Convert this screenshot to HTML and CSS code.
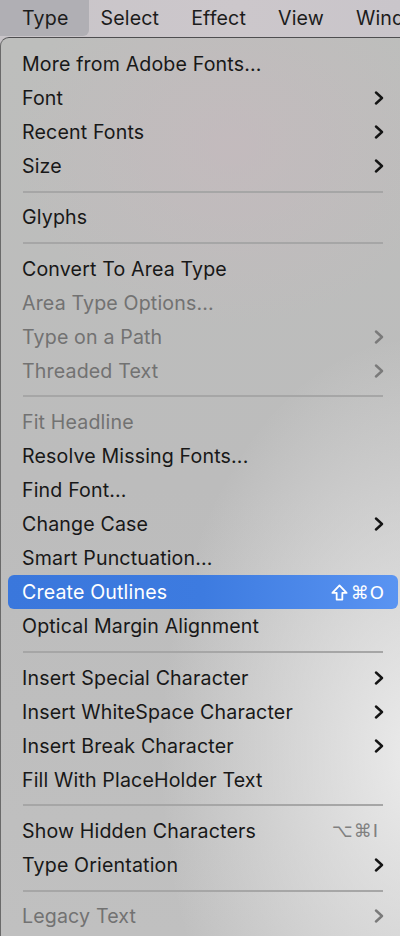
FILE: index.html
```html
<!DOCTYPE html>
<html>
<head>
<meta charset="utf-8">
<link rel="stylesheet" href="styles.css">
</head>
<body>
<div class="screen">
  <div class="menubar">
    <div class="mb-item active">Type</div>
    <div class="mb-item">Select</div>
    <div class="mb-item">Effect</div>
    <div class="mb-item">View</div>
    <div class="mb-item">Window</div>
  </div>
  <div class="menu">
    <div class="row"><span class="label">More from Adobe Fonts...</span></div>
    <div class="row"><span class="label">Font</span><svg class="chev" viewBox="0 0 10 14"><path d="M2 1.5 L8 7 L2 12.5"/></svg></div>
    <div class="row"><span class="label">Recent Fonts</span><svg class="chev" viewBox="0 0 10 14"><path d="M2 1.5 L8 7 L2 12.5"/></svg></div>
    <div class="row"><span class="label">Size</span><svg class="chev" viewBox="0 0 10 14"><path d="M2 1.5 L8 7 L2 12.5"/></svg></div>
    <div class="sep"></div>
    <div class="row"><span class="label">Glyphs</span></div>
    <div class="sep"></div>
    <div class="row"><span class="label">Convert To Area Type</span></div>
    <div class="row disabled"><span class="label">Area Type Options...</span></div>
    <div class="row disabled"><span class="label">Type on a Path</span><svg class="chev" viewBox="0 0 10 14"><path d="M2 1.5 L8 7 L2 12.5"/></svg></div>
    <div class="row disabled"><span class="label">Threaded Text</span><svg class="chev" viewBox="0 0 10 14"><path d="M2 1.5 L8 7 L2 12.5"/></svg></div>
    <div class="sep"></div>
    <div class="row disabled"><span class="label">Fit Headline</span></div>
    <div class="row"><span class="label">Resolve Missing Fonts...</span></div>
    <div class="row"><span class="label">Find Font...</span></div>
    <div class="row"><span class="label">Change Case</span><svg class="chev" viewBox="0 0 10 14"><path d="M2 1.5 L8 7 L2 12.5"/></svg></div>
    <div class="row"><span class="label">Smart Punctuation...</span></div>
    <div class="row selected"><span class="label">Create Outlines</span><span class="shortcut"><svg class="shift" viewBox="0 0 18 18"><path d="M9 1.5 L16.5 9.5 H12 V16.5 H6 V9.5 H1.5 Z"/></svg><span class="keys">⌘O</span></span></div>
    <div class="row"><span class="label">Optical Margin Alignment</span></div>
    <div class="sep"></div>
    <div class="row"><span class="label">Insert Special Character</span><svg class="chev" viewBox="0 0 10 14"><path d="M2 1.5 L8 7 L2 12.5"/></svg></div>
    <div class="row"><span class="label">Insert WhiteSpace Character</span><svg class="chev" viewBox="0 0 10 14"><path d="M2 1.5 L8 7 L2 12.5"/></svg></div>
    <div class="row"><span class="label">Insert Break Character</span><svg class="chev" viewBox="0 0 10 14"><path d="M2 1.5 L8 7 L2 12.5"/></svg></div>
    <div class="row"><span class="label">Fill With PlaceHolder Text</span></div>
    <div class="sep"></div>
    <div class="row"><span class="label">Show Hidden Characters</span><span class="shortcut dim"><span class="keys">⌥⌘I</span></span></div>
    <div class="row"><span class="label">Type Orientation</span><svg class="chev" viewBox="0 0 10 14"><path d="M2 1.5 L8 7 L2 12.5"/></svg></div>
    <div class="sep"></div>
    <div class="row disabled"><span class="label">Legacy Text</span><svg class="chev" viewBox="0 0 10 14"><path d="M2 1.5 L8 7 L2 12.5"/></svg></div>
  </div>
</div>
</body>
</html>
```
FILE: styles.css
```css
html, body {
  margin: 0;
  padding: 0;
}
body {
  width: 400px;
  height: 936px;
  overflow: hidden;
  font-family: Inter, "Noto Sans", "DejaVu Sans", sans-serif;
  background: #c8c4c8;
}
.screen {
  width: 400px;
  height: 936px;
  overflow: hidden;
  display: flex;
  flex-direction: column;
}
.menubar {
  height: 37px;
  flex: none;
  display: flex;
  align-items: stretch;
  background: linear-gradient(90deg, #c9c5c9 0%, #ccc7cb 60%, #c9c5ca 100%);
  white-space: nowrap;
  overflow: hidden;
}
.mb-item {
  padding: 0 16px;
  font-size: 19.6px;
  letter-spacing: 0.15px;
  line-height: 37px;
  color: #1c1c1c;
  flex: none;
}
.mb-item.active {
  padding: 0 21px 0 22px;
  margin-right: -5px;
  background: #b0afb4;
  border-radius: 0 0 6px 0;
  height: 36px;
  line-height: 36px;
}
.menu {
  flex: 1;
  width: 420px;
  box-sizing: border-box;
  border-top: 1px solid #4e4e50;
  border-left: 1px solid #6a6a6a;
  border-radius: 9px 0 0 0;
  padding-top: 9px;
  background:
    radial-gradient(ellipse 260px 420px at 100% 80%, rgba(238,238,238,0.95) 0%, rgba(238,238,238,0) 100%),
    radial-gradient(ellipse 220px 180px at 55% 12%, rgba(200,184,190,0.55) 0%, rgba(200,184,190,0) 100%),
    linear-gradient(180deg, #bdbebc 0%, #bcbcbc 50%, #c0c0c0 100%);
  display: flex;
  flex-direction: column;
}
.row {
  height: 34px;
  margin: 0 22px 0 7px;
  padding: 0 15px 0 14px;
  display: flex;
  align-items: center;
  justify-content: space-between;
  font-size: 19.6px;
  letter-spacing: 0.15px;
  color: #181818;
  border-radius: 6px;
  flex: none;
}
.row.disabled {
  color: #727272;
}
.row.selected {
  background: linear-gradient(90deg, #3a77dc 0%, #3d7be0 50%, #5a94f2 100%);
  color: #ffffff;
}
.chev {
  width: 10px;
  height: 14px;
  fill: none;
  stroke: #141414;
  stroke-width: 2.4;
  stroke-linecap: round;
  stroke-linejoin: round;
  margin-right: -1px;
}
.row.disabled .chev {
  stroke: #7a7a7a;
}
.shortcut {
  display: flex;
  align-items: center;
  gap: 3px;
  margin-right: -2px;
}
.shift {
  width: 17px;
  height: 17px;
  fill: none;
  stroke: #ffffff;
  stroke-width: 1.9;
  stroke-linejoin: round;
}
.keys {
  font-family: "DejaVu Sans", sans-serif;
  font-size: 18px;
  letter-spacing: 1px;
}
.shortcut.dim {
  color: #808080;
  margin-right: 4px;
}
.sep {
  height: 17.4px;
  flex: none;
  display: flex;
  align-items: center;
  margin: 0 37px 0 22px;
}
.sep::before {
  content: "";
  display: block;
  width: 100%;
  height: 2px;
  background: #a6a6a6;
}
```
